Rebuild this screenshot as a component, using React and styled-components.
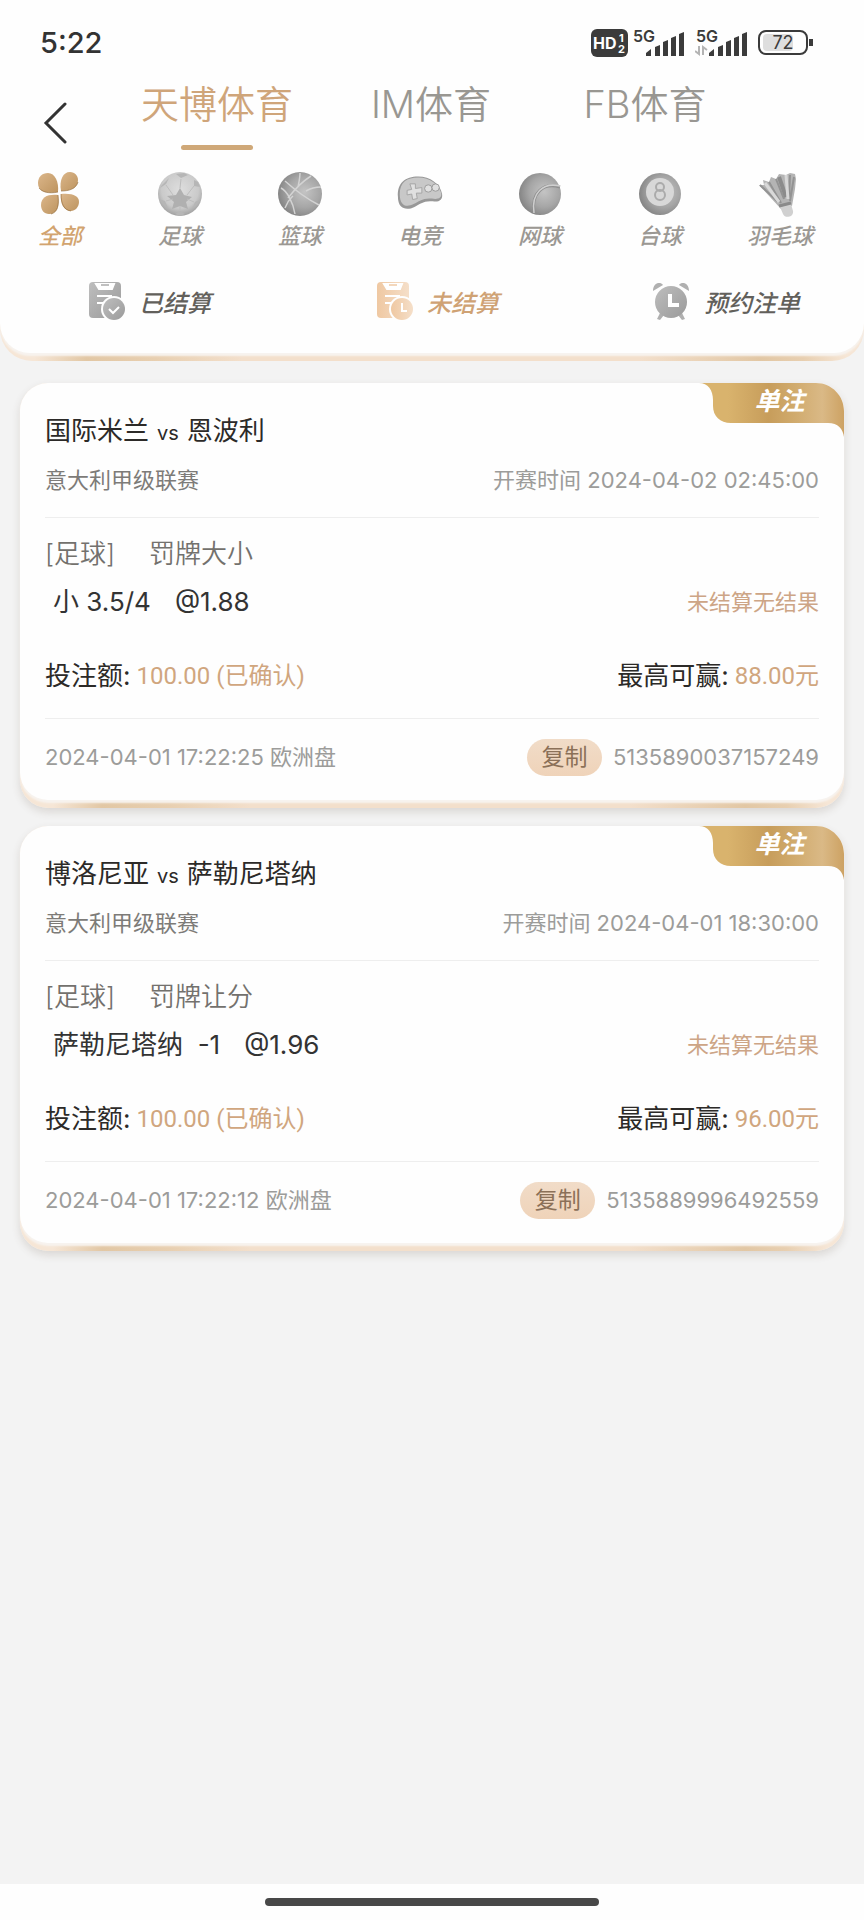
import React, { useState } from "react";
import styled, { createGlobalStyle, css } from "styled-components";

const Global = createGlobalStyle`
  * { box-sizing: border-box; }
  body {
    margin: 0;
    background: #f3f3f3;
    color: #333;
    font-family: Inter, "Noto Sans CJK SC", sans-serif;
  }
  button { font: inherit; color: inherit; background: none; border: 0; padding: 0; cursor: pointer; }
  svg { display: block; flex: none; }
`;

const Page = styled.div`
  min-height: 100vh;
  display: flex;
  flex-direction: column;
`;

const edge = css`
  background: linear-gradient(90deg, #f6e6d6 0, #f6e6d6 4%, #e2c7a4 10%, #e8cfb0 18%, #f3dfcb 28%, #f3dfcb 74%, #e2c7a4 88%, #e8cfb0 93%, #f6e6d6 98%);
`;

const HeaderEdge = styled.header`
  ${edge}
  padding-bottom: 8px;
  border-radius: 0 0 32px 32px;
`;

const HeaderBody = styled.div`
  background: #fefefe;
  border-radius: 0 0 30px 30px;
  box-shadow: 0 3px 2px #f7f3ef;
  padding-bottom: 32px;
`;

const StatusBar = styled.div`
  display: flex;
  align-items: center;
  justify-content: space-between;
  height: 86px;
  padding: 0 50px 0 40px;
`;

const Clock = styled.time`
  font-size: 29px;
  font-weight: 500;
  line-height: 40px;
`;

const StatusIcons = styled.div`
  display: flex;
  align-items: center;
  gap: 4px;
`;

const TopNav = styled.div`
  display: flex;
  height: 74px;
  padding-right: 112px;
`;

const BackButton = styled.button`
  width: 110px;
  padding-left: 42px;
`;

const Tabs = styled.nav`
  flex: 1;
  display: grid;
  grid-template-columns: repeat(3, 1fr);
`;

const Tab = styled.button`
  display: flex;
  flex-direction: column;
  align-items: center;
  font-size: 38px;
  font-weight: 350;
  line-height: 36px;
  color: ${(p) => (p.$active ? "#cfa57a" : "#999792")};
  &::after {
    content: "";
    width: 72px;
    height: 5px;
    margin-top: 23px;
    border-radius: 3px;
    background: ${(p) => (p.$active ? "#cfa878" : "transparent")};
  }
`;

const Sports = styled.nav`
  display: grid;
  grid-template-columns: repeat(7, 1fr);
  padding: 11px 24px 0 0;
`;

const Sport = styled.button`
  display: flex;
  flex-direction: column;
  align-items: center;
  gap: 4px;
  font-size: 22px;
  font-style: italic;
  font-weight: 500;
  line-height: 30px;
  color: ${(p) => (p.$active ? "#d2a46f" : "#9b9893")};
`;

const Filters = styled.nav`
  display: grid;
  grid-template-columns: repeat(3, 1fr);
  padding-top: 30px;
`;

const Filter = styled.button`
  display: flex;
  align-items: center;
  justify-content: center;
  gap: 14px;
  height: 40px;
  padding-left: 12px;
  font-size: 24px;
  font-style: italic;
  font-weight: 500;
  color: ${(p) => (p.$active ? "#cfa274" : "#62605b")};
`;

const BetList = styled.main`
  flex: 1;
  display: flex;
  flex-direction: column;
  gap: 18px;
  padding: 22px 20px;
`;

const CardEdge = styled.article`
  ${edge}
  padding-bottom: 8px;
  border-radius: 28px;
  box-shadow: 0 4px 8px rgba(90, 70, 50, 0.16);
`;

const CardBody = styled.div`
  position: relative;
  background: #fefefe;
  border-radius: 28px;
  box-shadow: 0 3px 2px #f7f3ef;
  padding: 25px 25px 0;
`;

const Ribbon = styled.div`
  position: absolute;
  top: 0;
  right: 0;
  width: 145px;
  height: 56px;
  padding-left: 16px;
  color: #fff;
  font-size: 25px;
  font-style: italic;
  font-weight: 700;
  line-height: 36px;
  text-align: center;
  svg { position: absolute; inset: 0; }
  span { position: relative; }
`;

const Row = styled.div`
  display: flex;
  align-items: center;
  justify-content: space-between;
  min-height: 48px;
  line-height: 32px;
  white-space: pre;
`;

const Section = styled.section`
  padding: ${(p) => p.$pad || "0"};
  border-bottom: ${(p) => (p.$last ? "0" : "1px solid #eeeeee")};
`;

const Teams = styled.h2`
  margin: 0;
  font-size: 26px;
  font-weight: 400;
  color: #2c2a28;
  small { font-size: 20px; margin: 0 8px; }
`;

const Note = styled.span`
  font-size: 22px;
  color: ${(p) => p.$color || "#9c9c9a"};
`;

const Market = styled.span`
  display: flex;
  gap: 34px;
  font-size: 26px;
  font-weight: 350;
  color: #73716d;
`;

const Pick = styled.span`
  display: flex;
  gap: 24px;
  padding-left: 8px;
  font-size: 26px;
`;

const Sum = styled.span`
  display: flex;
  align-items: center;
  gap: 6px;
  font-size: 26px;
  color: #2c2a28;
`;

const Amount = styled.span`
  font-family: Roboto, "Noto Sans CJK SC", sans-serif;
  font-size: 24px;
  font-weight: 400;
  color: #d0a67e;
`;

const Order = styled.span`
  display: flex;
  align-items: center;
  gap: 11px;
`;

const CopyButton = styled.button`
  width: 75px;
  height: 37px;
  border-radius: 19px;
  background: linear-gradient(#f1dcc8, #efd3b9);
  color: #8b7058;
  font-size: 23px;
  line-height: 36px;
`;

const HomeBar = styled.footer`
  display: flex;
  justify-content: center;
  height: 36px;
  padding-top: 14px;
  background: #fefefe;
  &::after {
    content: "";
    width: 334px;
    height: 8px;
    border-radius: 4px;
    background: #484848;
  }
`;

function HdIcon() {
  return (
    <svg width="37" height="28" viewBox="0 0 37 28" fontFamily="Inter, sans-serif" fontWeight="700" fill="#fff">
      <rect width="37" height="28" rx="6" fill="#3b3b3b" />
      <text x="2" y="20" fontSize="16">HD</text>
      <text x="28" y="13" fontSize="11">1</text>
      <text x="27" y="24" fontSize="11">2</text>
    </svg>
  );
}

function SignalIcon({ data }) {
  return (
    <svg width="59" height="36" viewBox="0 -4 59 36" fill="#3b3b3b">
      <text x="1" y="13" fontSize="16" fontWeight="600" fontFamily="Inter, sans-serif">5G</text>
      {data && <path d="M4 17v8l-4-3M8 26v-8l4 3" stroke="#b4b4b4" strokeWidth="2" fill="none" />}
      <path d="M14 27v-3l5-4v7zM23 27V18l5-2v11zM31 27V13l5-2v16zM39 27V9l5-2v20zM47 27V5l5-2v24z" />
    </svg>
  );
}

function BatteryIcon() {
  return (
    <svg width="56" height="26" viewBox="0 0 56 26">
      <rect x="5" y="4" width="30" height="17" rx="4" fill="#dedede" />
      <rect x="1" y="1" width="48" height="23" rx="7" fill="none" stroke="#3b3b3b" strokeWidth="2" />
      <path d="M53 9v7" stroke="#3b3b3b" strokeWidth="4" />
      <text x="25" y="19" textAnchor="middle" fontSize="18" fontFamily="Inter, sans-serif" fill="#3b3b3b">72</text>
    </svg>
  );
}

const HiddenDefs = styled.svg`
  position: absolute;
`;

function Defs() {
  return (
    <HiddenDefs width="0" height="0" aria-hidden="true">
      <defs>
        <linearGradient id="gold" x1="0" y1="0" x2="1" y2="1">
          <stop offset="0" stopColor="#dbb68a" /><stop offset="1" stopColor="#bd945f" />
        </linearGradient>
        <radialGradient id="ball" cx="0.6" cy="0.45" r="0.6">
          <stop offset="0" stopColor="#c4c4c4" /><stop offset="0.6" stopColor="#a6a6a6" /><stop offset="1" stopColor="#858585" />
        </radialGradient>
        <radialGradient id="soccer" cx="0.5" cy="0.4" r="0.6">
          <stop offset="0" stopColor="#dedede" /><stop offset="0.7" stopColor="#cacaca" /><stop offset="1" stopColor="#a0a0a0" />
        </radialGradient>
        <linearGradient id="grey" x1="0" y1="0" x2="1" y2="1">
          <stop offset="0" stopColor="#bebebe" /><stop offset="1" stopColor="#9a9a9a" />
        </linearGradient>
        <linearGradient id="peach" x1="0" y1="0" x2="1" y2="0">
          <stop offset="0" stopColor="#efc8a2" /><stop offset="1" stopColor="#f5dfc9" />
        </linearGradient>
        <linearGradient id="ribbon" x1="0" y1="0" x2="1" y2="0">
          <stop offset="0" stopColor="#d9b36d" /><stop offset="0.2" stopColor="#d9b36d" /><stop offset="0.48" stopColor="#c79d5b" />
          <stop offset="0.65" stopColor="#d0aa6c" /><stop offset="0.85" stopColor="#dab986" /><stop offset="1" stopColor="#cda263" />
        </linearGradient>
      </defs>
    </HiddenDefs>
  );
}

const sportArt = {
  all: (
    <>
      <path d="M21 21C10 23 1 21 1 12C1 6 5 2 11 2C18 2 22 11 21 21Z" fill="url(#gold)" />
      <path d="M24 20C22 9 26 1 33 1C38 1 41 5 41 9C41 16 35 20 24 20Z" fill="url(#gold)" />
      <path d="M21 24C23 35 20 43 12 43C7 43 4 39 4 34C4 26 11 23 21 24Z" fill="url(#gold)" />
      <path d="M24 23C36 22 42 25 42 31C42 36 38 40 34 40C27 40 23 33 24 23Z" fill="url(#gold)" />
      <path d="M21 21C12 23 5 21 2 17M24 20c8 0 15-2 17-9M21 24c1 10 0 17-7 19M24 23c0 10 3 16 10 17" fill="none" stroke="#8e6636" opacity=".6" />
    </>
  ),
  football: (
    <>
      <circle cx="23" cy="23" r="22" fill="url(#soccer)" />
      <path d="m23 17 4 7 8 2-6 5 2 7-8-3-8 3 2-7-7-6 9-1z" fill="#b0b0b0" />
      <path d="M19 3l5 4 7-3-4-2zM3 17l6-4 3-6-7 7zM37 9l0 6 6 1-2-5zM2 28l6 2 3 7-6-5zM44 28l-6 3-3 7 6-6zM18 43l5-3 5 3-5 2z" fill="#b6b6b6" />
      <path d="M24 8l-1 9M9 14l7 10M37 15l-7 9M9 30l7-2M37 31l-7-3M23 35v5" stroke="#bdbdbd" />
    </>
  ),
  basketball: (
    <>
      <circle cx="23" cy="23" r="22" fill="url(#ball)" />
      <path d="M11 27C18 18 26 10 34 5M8 10c10 9 22 18 34 24M4 17c6 3 12 14 14 26M21 16c1-5 2-9 2-14M8 37c3-8 6-10 8-12M29 20c5-3 10-4 15-4" fill="none" stroke="#d3d3d3" strokeWidth="1.500" />
    </>
  ),
  esports: (
    <>
      <path d="M0 26C-1 11 8 4 22 4C35 4 46 12 48 23C49 30 44 32 38 31C28 30 24 34 18 37C10 41 0 40 0 26Z" fill="#989898" />
      <path d="M2 23C2 10 10 5 22 5C35 5 45 13 47 22C48 28 43 29 37 28C27 27 23 31 17 34C9 38 2 36 2 23Z" fill="#c8c8c8" />
      <path d="M13 12h6v5l7-1v6h-6l1 6-5 1-1-6-5 1v-5l5-1z" fill="#e0e0e0" stroke="#a3a3a3" />
      <circle cx="33" cy="17" r="4" fill="#e0e0e0" stroke="#989898" /><circle cx="41" cy="16" r="4" fill="#e0e0e0" stroke="#989898" />
    </>
  ),
  tennis: (
    <>
      <circle cx="23" cy="23" r="21" fill="url(#ball)" />
      <path d="M17 42C14 22 26 11 43 16" fill="none" stroke="#8f8f8f" strokeWidth="3" />
      <path d="M17 42C14 22 26 11 43 15" fill="none" stroke="#cfcfcf" strokeWidth="1.500" />
    </>
  ),
  billiards: (
    <>
      <circle cx="23" cy="23" r="21" fill="url(#ball)" />
      <circle cx="23" cy="21" r="14" fill="#d8d8d8" />
      <circle cx="23" cy="16" r="4" fill="none" stroke="#ababab" strokeWidth="2" />
      <circle cx="23" cy="24" r="5" fill="none" stroke="#ababab" strokeWidth="2" />
    </>
  ),
  badminton: (
    <>
      <path d="M2 14l5 0-1-5 6 2 2-5 5 2 3-5 7 1 4-2 5 1 1 5-1 10-3 17-11 3z" fill="#b4b4b4" />
      <path d="M3 14l18 17M12 11l12 21M19 8l8 20M33 4l-1 24M37 6l-4 24" stroke="#939393" strokeWidth="2" />
      <path d="M22 6l7 20" stroke="#8b8b8b" strokeWidth="4" />
      <path d="M8 12l14 19M29 4l2 24" stroke="#d8d8d8" strokeWidth="3" />
      <path d="M23 36l11-3 2 7c1 6-8 8-10 3z" fill="#d0d0d0" /><path d="M22 35l12-3" stroke="#8a8a8a" strokeWidth="3" />
    </>
  ),
};

function SportIcon({ kind }) {
  return <svg width="46" height="46" viewBox={kind === "esports" ? "-1 0 50 46" : "0 0 46 46"}>{sportArt[kind]}</svg>;
}

function SlipIcon({ paint, pending }) {
  return (
    <svg width="36" height="38" viewBox="0 0 36 38">
      <path d="M4 0h24q4 0 4 4v32H4q-4 0-4-4V4q0-4 4-4z" fill={`url(#${paint})`} />
      <path d="M7 2h18l-2 5H10zM8 14h15M8 21h8" fill="#fff" stroke="#fff" strokeWidth="2" />
      <path d="M12 3h9" stroke={`url(#${paint})`} strokeWidth="2" />
      <path d="M12 2h8v2h-8z" fill={paint === "grey" ? "#c0c0c0" : "#f3d7bc"} />
      <circle cx="25" cy="27" r="13" fill="#fefefe" />
      <circle cx="25" cy="27" r="11" fill={`url(#${paint})`} />
      <path d={pending ? "M25 21v8h5" : "M20 27l4 4 6-6"} fill="none" stroke="#fff" strokeWidth="2" />
    </svg>
  );
}

function AlarmIcon() {
  return (
    <svg width="38" height="38" viewBox="0 0 38 38">
      <path d="M1 9C1 1 8-1 11 3ZM37 9C37 1 30-1 27 3ZM8 31l4 2-4 5-3-1zM30 31l-4 2 4 5 3-1z" fill="#b0b0b0" />
      <circle cx="19" cy="20" r="16" fill="url(#grey)" />
      <path d="M18 12v11h9" fill="none" stroke="#fff" strokeWidth="4" />
    </svg>
  );
}

const tabs = ["天博体育", "IM体育", "FB体育"];
const sports = [
  ["all", "全部"], ["football", "足球"], ["basketball", "篮球"], ["esports", "电竞"],
  ["tennis", "网球"], ["billiards", "台球"], ["badminton", "羽毛球"],
];
const filters = [
  ["已结算", <SlipIcon paint="grey" />],
  ["未结算", <SlipIcon paint="peach" pending />],
  ["预约注单", <AlarmIcon />],
];
const bets = [
  {
    home: "国际米兰", away: "恩波利", start: "2024-04-02 02:45:00", market: "罚牌大小",
    pick: "小 3.5/4", odds: "@1.88", win: "88.00元", placed: "2024-04-01 17:22:25", id: "5135890037157249",
  },
  {
    home: "博洛尼亚", away: "萨勒尼塔纳", start: "2024-04-01 18:30:00", market: "罚牌让分",
    pick: "萨勒尼塔纳  -1", odds: "@1.96", win: "96.00元", placed: "2024-04-01 17:22:12", id: "5135889996492559",
  },
];

function BetCard({ bet }) {
  return (
    <CardEdge>
      <CardBody>
        <Ribbon>
          <svg width="145" height="56" viewBox="0 0 145 56">
            <path d="M0 0H117C133 0 145 13 145 28V54C144 46 139 40 129 40H32C21 40 14 33 14 23V17C14 7 9 0 0 0Z" fill="url(#ribbon)" />
          </svg>
          <span>单注</span>
        </Ribbon>
        <Section $pad="0 0 13px">
          <Row><Teams>{bet.home}<small>vs</small>{bet.away}</Teams></Row>
          <Row>
            <Note $color="#7d7b78">意大利甲级联赛</Note>
            <Note>开赛时间 {bet.start}</Note>
          </Row>
        </Section>
        <Section $pad="12px 0 18px">
          <Row><Market><span>[足球]</span><span>{bet.market}</span></Market></Row>
          <Row>
            <Pick><span>{bet.pick}</span><span>{bet.odds}</span></Pick>
            <Note $color="#cda586">未结算无结果</Note>
          </Row>
          <Section as="div" $last $pad="26px 0 0">
            <Row>
              <Sum>投注额:<Amount>100.00 (已确认)</Amount></Sum>
              <Sum>最高可赢:<Amount>{bet.win}</Amount></Sum>
            </Row>
          </Section>
        </Section>
        <Section $last $pad="14px 0 19px">
          <Row>
            <Note>{bet.placed} 欧洲盘</Note>
            <Order><CopyButton type="button">复制</CopyButton><Note>{bet.id}</Note></Order>
          </Row>
        </Section>
      </CardBody>
    </CardEdge>
  );
}

export default function App() {
  const [tab, setTab] = useState(0);
  const [sport, setSport] = useState("all");
  const [filter, setFilter] = useState(1);
  return (
    <Page>
      <Global />
      <Defs />
      <HeaderEdge>
        <HeaderBody>
          <StatusBar>
            <Clock>5:22</Clock>
            <StatusIcons><HdIcon /><SignalIcon /><SignalIcon data /><BatteryIcon /></StatusIcons>
          </StatusBar>
          <TopNav>
            <BackButton type="button" aria-label="返回">
              <svg width="26" height="42" viewBox="0 0 26 42" fill="none" stroke="#333" strokeWidth="3" strokeLinecap="round">
                <path d="M23 2 4 21l19 19" />
              </svg>
            </BackButton>
            <Tabs>
              {tabs.map((t, i) => (
                <Tab key={t} type="button" $active={tab === i} onClick={() => setTab(i)}>{t}</Tab>
              ))}
            </Tabs>
          </TopNav>
          <Sports>
            {sports.map(([k, label]) => (
              <Sport key={k} type="button" $active={sport === k} onClick={() => setSport(k)}>
                <SportIcon kind={k} />{label}
              </Sport>
            ))}
          </Sports>
          <Filters>
            {filters.map(([label, icon], i) => (
              <Filter key={label} type="button" $active={filter === i} onClick={() => setFilter(i)}>
                {icon}{label}
              </Filter>
            ))}
          </Filters>
        </HeaderBody>
      </HeaderEdge>
      <BetList>
        {bets.map((bet) => <BetCard key={bet.id} bet={bet} />)}
      </BetList>
      <HomeBar />
    </Page>
  );
}
